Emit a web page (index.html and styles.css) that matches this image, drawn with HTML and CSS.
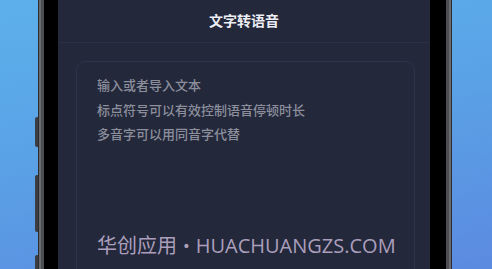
FILE: index.html
```html
<!DOCTYPE html>
<html lang="zh">
<head>
<meta charset="utf-8">
<link rel="stylesheet" href="styles.css">
</head>
<body>
<div class="stage">
  <div class="phone">
    <span class="btn btn1"></span>
    <span class="btn btn2"></span>
    <span class="btn btn3"></span>
    <div class="bezel">
      <div class="screen">
        <div class="header">文字转语音</div>
        <div class="card">
          <p>输入或者导入文本</p>
          <p>标点符号可以有效控制语音停顿时长</p>
          <p>多音字可以用同音字代替</p>
        </div>
      </div>
    </div>
  </div>
  <div class="watermark">华创应用 <span class="dot">•</span> HUACHUANGZS.COM</div>
</div>
</body>
</html>
```
FILE: styles.css
```css
html, body {
  margin: 0;
  padding: 0;
}
body {
  width: 492px;
  height: 269px;
  overflow: hidden;
  font-family: "Noto Sans CJK SC", "Noto Sans", sans-serif;
}
.stage {
  position: relative;
  width: 492px;
  height: 269px;
  overflow: hidden;
  background: linear-gradient(170deg, #5cb0ea 0%, #5aa2e6 45%, #5b8ae0 100%);
}
.phone {
  position: relative;
  margin-left: 38px;
  margin-top: -100px;
  width: 414px;
  height: 440px;
  box-sizing: border-box;
  padding: 6px;
  border-radius: 52px;
  background: #4d4e52;
  box-shadow: inset 0 0 0 1px #2b2c30, inset 0 0 0 3px #6a6b70;
}
.btn {
  position: absolute;
  left: -3px;
  width: 3px;
  background: #3c3d42;
  border-radius: 2px 0 0 2px;
}
.btn1 { top: 217px; height: 30px; }
.btn2 { top: 275px; height: 57px; }
.btn3 { top: 355px; height: 40px; }
.bezel {
  height: 100%;
  box-sizing: border-box;
  padding: 14px 16px 14px 14px;
  background: #000;
  border-radius: 46px;
}
.screen {
  height: 100%;
  background: #23283b;
  border-radius: 34px;
  padding-top: 78px;
  box-sizing: border-box;
}
.header {
  height: 45px;
  box-sizing: border-box;
  padding-top: 10px;
  border-bottom: 1px solid #2b3044;
  text-align: center;
  color: #eceef3;
  font-size: 14px;
  font-weight: 700;
  line-height: 24px;
}
.card {
  margin: 18px 15px 0 18px;
  height: 300px;
  border: 1px solid #2e3347;
  border-radius: 9px;
  padding: 11px 20px;
}
.card p {
  margin: 0;
  color: #8c8f9b;
  font-size: 13px;
  line-height: 24.5px;
  font-weight: 500;
}
.watermark {
  position: absolute;
  left: 97px;
  top: 232px;
  color: #ab9fbb;
  font-size: 20px;
  line-height: 28px;
  font-weight: 400;
  white-space: nowrap;
  font-family: "Open Sans", "Noto Sans CJK SC", sans-serif;
}
.dot {
  font-family: "DejaVu Sans", sans-serif;
  font-size: 14px;
  vertical-align: 2px;
}
```
